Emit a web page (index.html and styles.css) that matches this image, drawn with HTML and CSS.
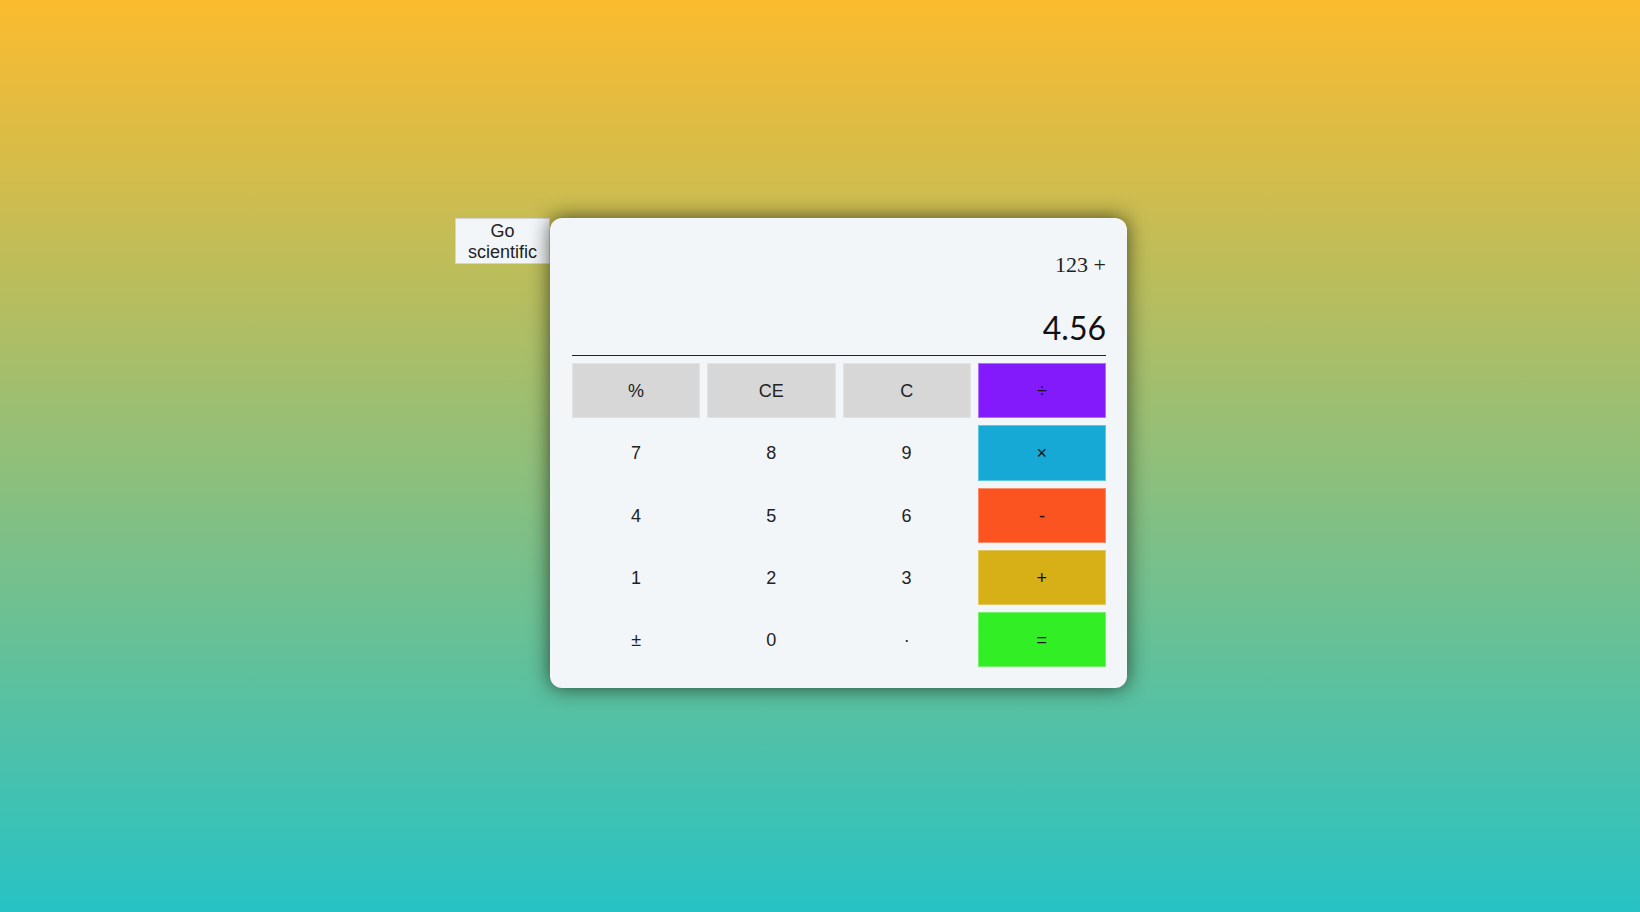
FILE: index.html
```html
<!DOCTYPE html>
<html lang="en">
<head>
<meta charset="utf-8">
<title>Calculator</title>
<link rel="stylesheet" href="styles.css">
</head>
<body>
<main class="stage">
  <div class="calc-wrap">
    <button class="mode-btn" type="button">Go scientific</button>
    <section class="calc">
      <div class="screen">
        <div class="prev">123 +</div>
        <div class="cur">4.56</div>
      </div>
      <div class="keys">
        <button class="key fn">%</button>
        <button class="key fn">CE</button>
        <button class="key fn">C</button>
        <button class="key op div">÷</button>
        <button class="key">7</button>
        <button class="key">8</button>
        <button class="key">9</button>
        <button class="key op mul">×</button>
        <button class="key">4</button>
        <button class="key">5</button>
        <button class="key">6</button>
        <button class="key op sub">-</button>
        <button class="key">1</button>
        <button class="key">2</button>
        <button class="key">3</button>
        <button class="key op add">+</button>
        <button class="key">±</button>
        <button class="key">0</button>
        <button class="key">·</button>
        <button class="key op eq">=</button>
      </div>
    </section>
  </div>
</main>
</body>
</html>
```

FILE: styles.css
```css
* { box-sizing: border-box; }

html, body {
  margin: 0;
  height: 100%;
}

body {
  background: linear-gradient(to bottom, #fbbb2f 0%, #27c2c4 100%);
  font-family: "Liberation Sans", Arial, sans-serif;
}

.stage {
  height: 100%;
  display: flex;
  justify-content: center;
  align-items: center;
  padding-right: 58px;
  padding-bottom: 6px;
}

.calc-wrap {
  display: flex;
  align-items: flex-start;
}

.mode-btn {
  width: 95px;
  height: 46px;
  padding: 1px 4px 0;
  background: #f3f6f9;
  border: 1px solid #d4d4d4;
  font-family: "Liberation Sans", Arial, sans-serif;
  font-size: 18px;
  line-height: 21px;
  color: #222;
  text-align: center;
}

.calc {
  width: 577px;
  background: #f3f6f9;
  border-radius: 12px;
  padding: 35px 21px 20.75px 22px;
  box-shadow: 0 0 20px rgba(15, 20, 5, 0.7);
}

.screen {
  display: flex;
  flex-direction: column;
  align-items: flex-end;
  padding-bottom: 8.5px;
  border-bottom: 1px solid #222;
}

.prev {
  font-family: "Liberation Serif", "Times New Roman", serif;
  font-size: 22px;
  line-height: 24px;
  height: 24px;
  color: #222;
}

.cur {
  margin-top: 31.5px;
  font-family: Lato, "Liberation Sans", sans-serif;
  font-size: 32px;
  line-height: 38px;
  color: #111;
}

.keys {
  margin-top: 7px;
  display: grid;
  grid-template-columns: repeat(4, 1fr);
  grid-auto-rows: 55.25px;
  column-gap: 7px;
  row-gap: 7px;
}

.key {
  border: 1px solid transparent;
  background: transparent;
  font-family: "Liberation Sans", Arial, sans-serif;
  font-size: 18px;
  color: #222;
  padding: 2px 0 0;
  display: flex;
  align-items: center;
  justify-content: center;
}

.key.fn {
  background: #d7d7d7;
  border-color: #e2e3e4;
}

.key.op { color: #111; }
.key.div { background: #831afb; border-color: #b071fb; }
.key.mul { background: #16a9d6; border-color: #62c5e4; }
.key.sub { background: #fb5421; border-color: #fb8c6a; }
.key.add { background: #d6b016; border-color: #e3c760; }
.key.eq  { background: #32ee25; border-color: #75f06c; }
```
